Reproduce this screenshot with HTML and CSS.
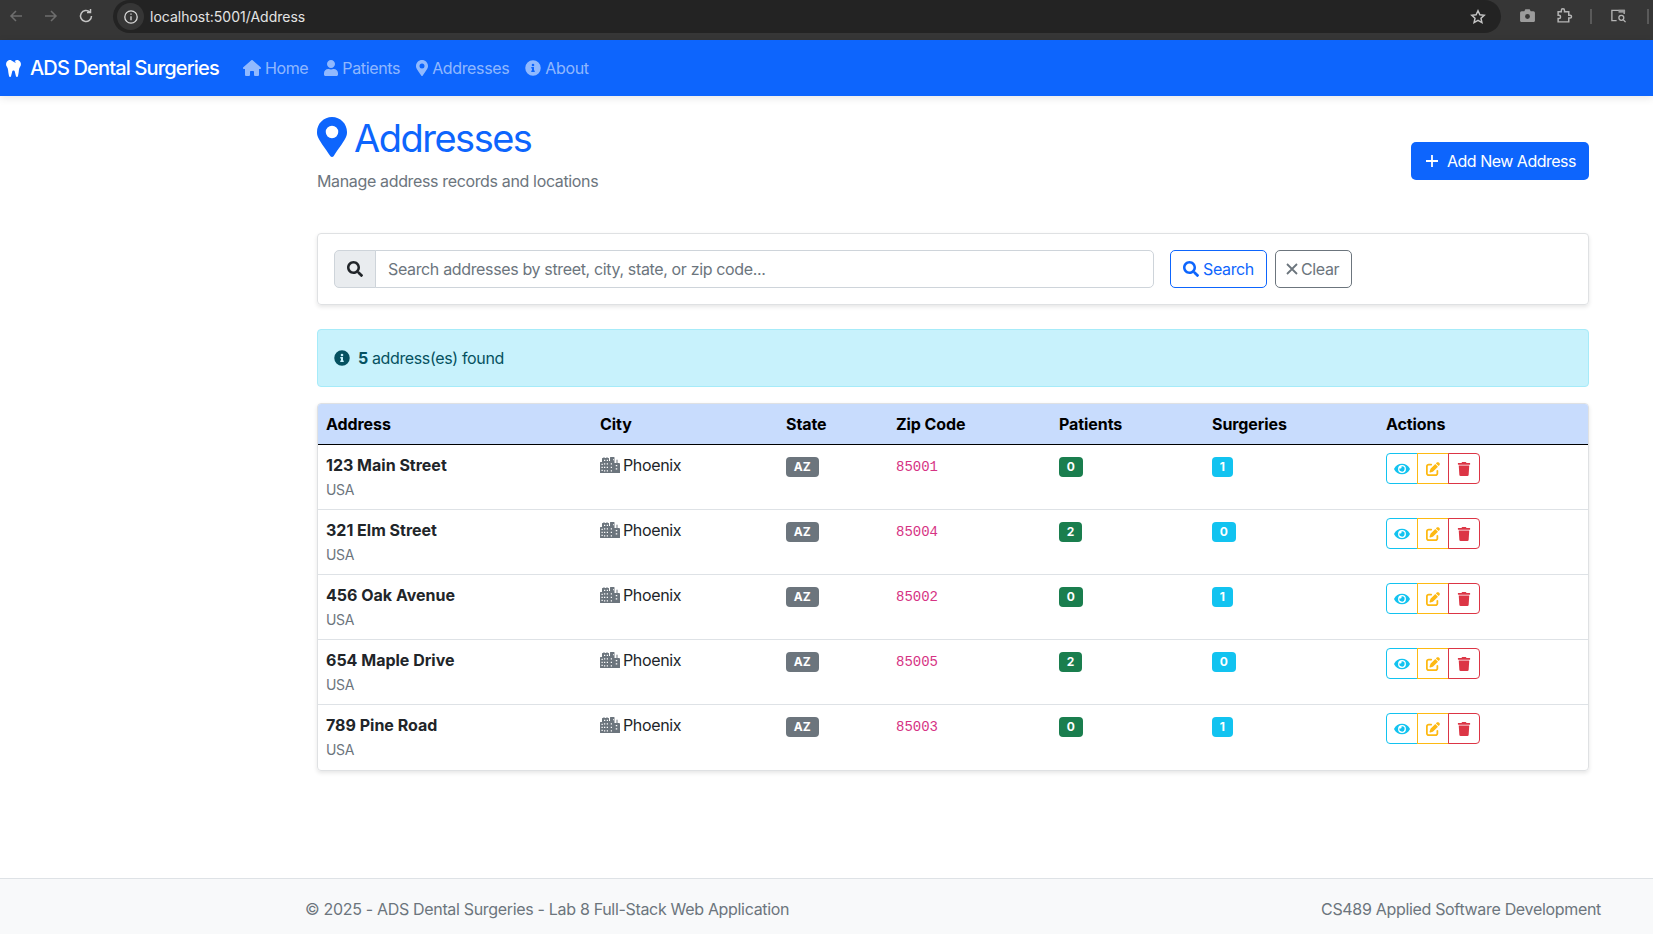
FILE: index.html
```html
<!DOCTYPE html>
<html lang="en">
<head>
    <meta charset="UTF-8">
    <meta name="viewport" content="width=device-width, initial-scale=1.0">
    <title>Addresses - ADS Dental Surgeries</title>
    <link rel="stylesheet" href="styles.css">
</head>
<body>
    <svg class="defs" aria-hidden="true">
        <symbol id="i-tooth" viewBox="0 0 448 512"><path d="M443.98 96.25c-11.01-45.22-47.11-82.06-92.01-93.72-32.19-8.36-63 5.1-89.14 24.33-3.25 2.39-6.96 3.73-10.5 5.48l28.32 18.21c7.42 4.77 9.58 14.67 4.8 22.11-4.46 6.95-14.27 9.86-22.11 4.8L162.83 12.84c-20.7-10.85-43.38-16.4-66.81-10.31-44.9 11.67-81 48.5-92.01 93.72-10.13 41.62-.42 80.81 21.5 110.43 23.36 31.57 32.68 68.66 36.29 107.35 4.4 47.16 10.33 94.16 20.94 140.32l7.8 33.95c3.19 13.87 15.49 23.7 29.67 23.7 13.97 0 26.15-9.55 29.54-23.16l34.47-138.42c4.56-18.32 20.96-31.16 39.76-31.16s35.2 12.85 39.76 31.16l34.47 138.42c3.39 13.61 15.57 23.16 29.54 23.16 14.18 0 26.48-9.83 29.67-23.7l7.8-33.95c10.61-46.15 16.53-93.16 20.94-140.32 3.61-38.7 12.93-75.78 36.29-107.35 21.95-29.61 31.66-68.8 21.53-110.43z"/></symbol>
        <symbol id="i-home" viewBox="0 0 576 512"><path d="M575.8 255.500c0 18-15 32.100-32 32.100h-32l.7 160.200c0 2.700-.2 5.400-.5 8.100V472c0 22.100-17.900 40-40 40H456c-1.100 0-2.200 0-3.300-.1-1.400.1-2.800.1-4.200.1H392c-22.100 0-40-17.900-40-40v-88c0-17.700-14.300-32-32-32h-64c-17.700 0-32 14.300-32 32v88c0 22.100-17.900 40-40 40h-55.900c-1.500 0-3-.1-4.500-.2-1.200.1-2.400.2-3.600.2H104c-22.100 0-40-17.900-40-40V360c0-.9 0-1.900.1-2.800v-69.600H32c-18 0-32-14-32-32.100 0-9 3-17 10-24L266.400 8c7-7 15-8 22-8s15 2 21 7l255.400 224.500c8 7 12 15 11 24z"/></symbol>
        <symbol id="i-user" viewBox="0 0 448 512"><path d="M224 256c70.7 0 128-57.3 128-128S294.7 0 224 0 96 57.3 96 128s57.3 128 128 128zm89.6 32h-16.7c-22.2 10.2-46.9 16-72.9 16s-50.6-5.8-72.9-16h-16.7C60.2 288 0 348.2 0 422.4V464c0 26.5 21.5 48 48 48h352c26.5 0 48-21.5 48-48v-41.6c0-74.2-60.2-134.4-134.4-134.4z"/></symbol>
        <symbol id="i-pin" viewBox="0 0 384 512"><path fill-rule="evenodd" d="M172 501C27 291 0 263 0 192 0 86 86 0 192 0s192 86 192 192c0 71-27 99-172 309-10 14-30 14-40 0zM192 272a80 80 0 1 0 0-160 80 80 0 0 0 0 160z"/></symbol>
        <symbol id="i-info" viewBox="0 0 512 512"><path d="M256 8a248 248 0 1 0 0 496 248 248 0 0 0 0-496zm0 110a42 42 0 1 1 0 84 42 42 0 0 1 0-84zm56 254c0 7-5 12-12 12h-88c-7 0-12-5-12-12v-24c0-7 5-12 12-12h12v-64h-12c-7 0-12-5-12-12v-24c0-7 5-12 12-12h64c7 0 12 5 12 12v100h12c7 0 12 5 12 12z"/></symbol>
        <symbol id="i-search" viewBox="0 0 512 512"><path d="M505 442.7L405.3 343c-4.5-4.5-10.6-7-17-7H372c27.6-35.3 44-79.7 44-128C416 93.1 322.9 0 208 0S0 93.1 0 208s93.1 208 208 208c48.3 0 92.7-16.4 128-44v16.3c0 6.4 2.5 12.5 7 17l99.7 99.7c9.4 9.4 24.6 9.4 33.9 0l28.3-28.3c9.4-9.4 9.4-24.6.1-34zM208 336c-70.7 0-128-57.2-128-128 0-70.7 57.2-128 128-128 70.7 0 128 57.2 128 128 0 70.7-57.2 128-128 128z"/></symbol>
        <symbol id="i-city" viewBox="0 0 640 512"><path fill-rule="evenodd" d="M0 176a16 16 0 0 1 16-16h48V48a16 16 0 0 1 16-16h32V16a16 16 0 0 1 32 0v16h64V16a16 16 0 0 1 32 0v16h32a16 16 0 0 1 16 16v80h32V16a16 16 0 0 1 16-16h112a16 16 0 0 1 16 16v176h64V96a16 16 0 0 1 32 0v96h48a32 32 0 0 1 32 32v272a16 16 0 0 1-16 16H16a16 16 0 0 1-16-16zM48 216v40h40v-40zm0 96v40h40v-40zm0 96v40h40v-40zM128 88v40h40V88zm0 112v40h40v-40zm0 112v40h40v-40zm0 112v40h40v-40zM216 88v40h40V88zm0 112v40h40v-40zm0 112v40h40v-40zm0 112v40h40v-40zM344 200v40h40v-40zm0 112v40h40v-40zm0 112v40h40v-40zM504 256v40h48v-40zm0 104v40h48v-40zM416 64v40h24V64z"/></symbol>
        <symbol id="i-eye" viewBox="0 0 576 512"><path d="M572.52 241.4C518.29 135.59 410.93 64 288 64S57.68 135.64 3.48 241.41a32.35 32.35 0 0 0 0 29.19C57.71 376.41 165.07 448 288 448s230.32-71.64 284.52-177.41a32.35 32.35 0 0 0 0-29.19zM288 400a144 144 0 1 1 144-144 143.93 143.93 0 0 1-144 144zm0-240a95.31 95.31 0 0 0-25.31 3.79 47.85 47.85 0 0 1-66.9 66.9A95.78 95.78 0 1 0 288 160z"/></symbol>
        <symbol id="i-edit" viewBox="0 0 512 512"><path d="M471.6 21.700c-21.900-21.900-57.300-21.900-79.200 0L362.300 51.700l97.900 97.900 30.100-30.100c21.900-21.900 21.900-57.300 0-79.200L471.600 21.700zm-299.200 220c-6.100 6.100-10.800 13.600-13.500 21.900l-29.600 88.800c-2.900 8.600-.6 18.100 5.800 24.600s15.900 8.700 24.600 5.800l88.800-29.600c8.200-2.700 15.700-7.400 21.900-13.500L437.700 172.300 339.700 74.300 172.400 241.700zM96 64C43 64 0 107 0 160v256c0 53 43 96 96 96h256c53 0 96-43 96-96v-96c0-17.700-14.300-32-32-32s-32 14.300-32 32v96c0 17.700-14.300 32-32 32H96c-17.700 0-32-14.300-32-32V160c0-17.700 14.300-32 32-32h96c17.700 0 32-14.300 32-32s-14.300-32-32-32H96z"/></symbol>
        <symbol id="i-trash" viewBox="0 0 448 512"><path d="M432 32H312l-9.4-18.7A24 24 0 0 0 281.1 0H166.8a23.72 23.72 0 0 0-21.4 13.3L136 32H16A16 16 0 0 0 0 48v32a16 16 0 0 0 16 16h416a16 16 0 0 0 16-16V48a16 16 0 0 0-16-16zM53.2 467a48 48 0 0 0 47.9 45h245.8a48 48 0 0 0 47.9-45L416 128H32z"/></symbol>
    </svg>

    <div class="chrome">
        <svg class="chrome-icon dim" viewBox="0 0 16 16"><path d="M14 8H3M8 3 3 8l5 5"/></svg>
        <svg class="chrome-icon dim" viewBox="0 0 16 16"><path d="M2 8h11M8 3l5 5-5 5"/></svg>
        <svg class="chrome-icon" viewBox="0 0 16 16"><path d="M13.5 8a5.5 5.5 0 1 1-1.7-4M12.5 1v3.4H9"/></svg>
        <div class="urlbar">
            <span class="url-info"><svg viewBox="0 0 16 16"><circle cx="8" cy="8" r="6.2"/><path d="M8 7.2v4M8 4.6v1.2"/></svg></span>
            <span class="url-text">localhost:5001/Address</span>
            <svg class="chrome-icon star" viewBox="0 0 16 16"><path d="M8 1.8l1.9 4 4.3.5-3.2 3 .9 4.3L8 11.4l-3.9 2.2.9-4.3-3.2-3 4.3-.5z"/></svg>
        </div>
        <svg class="chrome-tool" viewBox="0 0 16 16"><path class="solid" fill-rule="evenodd" d="M1 5.5A1.5 1.5 0 0 1 2.500 4H5l1-2h4l1 2h2.500A1.500 1.500 0 0 1 15 5.500V13a1 1 0 0 1-1 1H2a1 1 0 0 1-1-1zM8 11.200a2.300 2.300 0 1 0 0-4.600 2.300 2.300 0 0 0 0 4.600z"/></svg>
        <svg class="chrome-tool" viewBox="0 0 16 16"><path d="M2 4.500h3V3.200a1.500 1.500 0 0 1 3 0v1.300h4v3.300h1.300a1.300 1.300 0 0 1 0 2.600H12V14H2v-3.200h.8a1.500 1.500 0 0 0 0-3H2z"/></svg>
        <span class="chrome-sep"></span>
        <svg class="chrome-tool" viewBox="0 0 18 16"><path d="M7 13.500H2V2.500h13v4"/><path class="solid" d="M9 2h7v3H9z"/><circle cx="12" cy="10.500" r="2.600"/><path d="M14 12.500l2.500 2.500"/></svg>
        <span class="chrome-sep last"></span>
    </div>

    <nav class="navbar">
        <a class="brand" href="#"><svg class="icon tooth"><use href="#i-tooth"/></svg>ADS Dental Surgeries</a>
        <div class="nav-links">
            <a href="#"><svg class="icon home"><use href="#i-home"/></svg>Home</a>
            <a href="#"><svg class="icon user"><use href="#i-user"/></svg>Patients</a>
            <a href="#"><svg class="icon pin"><use href="#i-pin"/></svg>Addresses</a>
            <a href="#"><svg class="icon info"><use href="#i-info"/></svg>About</a>
        </div>
    </nav>

    <main class="page">
        <div class="page-head">
            <div>
                <h1><svg class="icon"><use href="#i-pin"/></svg>Addresses</h1>
                <p class="lead">Manage address records and locations</p>
            </div>
            <a class="btn btn-primary" href="#"><svg class="stroke-icon" viewBox="0 0 16 16"><path d="M2 8h12M8 2v12"/></svg>Add New Address</a>
        </div>

        <form class="search-card">
            <div class="input-group">
                <span class="input-addon"><svg class="icon"><use href="#i-search"/></svg></span>
                <input type="text" placeholder="Search addresses by street, city, state, or zip code...">
            </div>
            <button class="btn btn-outline-primary" type="button"><svg class="icon"><use href="#i-search"/></svg>Search</button>
            <button class="btn btn-outline-secondary" type="button"><svg class="stroke-icon" viewBox="0 0 16 16"><path d="M3 3l10 10M13 3 3 13"/></svg>Clear</button>
        </form>

        <div class="alert"><svg class="icon"><use href="#i-info"/></svg><strong>5</strong> address(es) found</div>

        <div class="table-card">
            <table>
                <colgroup>
                    <col class="c-address"><col class="c-city"><col class="c-state"><col class="c-zip"><col class="c-patients"><col class="c-surgeries"><col>
                </colgroup>
                <thead>
                    <tr><th>Address</th><th>City</th><th>State</th><th>Zip Code</th><th>Patients</th><th>Surgeries</th><th>Actions</th></tr>
                </thead>
                <tbody>
                    <tr>
                        <td><strong>123 Main Street</strong><small>USA</small></td>
                        <td><svg class="icon city"><use href="#i-city"/></svg>Phoenix</td>
                        <td><span class="badge gray">AZ</span></td>
                        <td><code>85001</code></td>
                        <td><span class="badge green">0</span></td>
                        <td><span class="badge cyan">1</span></td>
                        <td><div class="btn-group"><a class="view" href="#"><svg class="icon"><use href="#i-eye"/></svg></a><a class="edit" href="#"><svg class="icon"><use href="#i-edit"/></svg></a><a class="del" href="#"><svg class="icon"><use href="#i-trash"/></svg></a></div></td>
                    </tr>
                    <tr>
                        <td><strong>321 Elm Street</strong><small>USA</small></td>
                        <td><svg class="icon city"><use href="#i-city"/></svg>Phoenix</td>
                        <td><span class="badge gray">AZ</span></td>
                        <td><code>85004</code></td>
                        <td><span class="badge green">2</span></td>
                        <td><span class="badge cyan">0</span></td>
                        <td><div class="btn-group"><a class="view" href="#"><svg class="icon"><use href="#i-eye"/></svg></a><a class="edit" href="#"><svg class="icon"><use href="#i-edit"/></svg></a><a class="del" href="#"><svg class="icon"><use href="#i-trash"/></svg></a></div></td>
                    </tr>
                    <tr>
                        <td><strong>456 Oak Avenue</strong><small>USA</small></td>
                        <td><svg class="icon city"><use href="#i-city"/></svg>Phoenix</td>
                        <td><span class="badge gray">AZ</span></td>
                        <td><code>85002</code></td>
                        <td><span class="badge green">0</span></td>
                        <td><span class="badge cyan">1</span></td>
                        <td><div class="btn-group"><a class="view" href="#"><svg class="icon"><use href="#i-eye"/></svg></a><a class="edit" href="#"><svg class="icon"><use href="#i-edit"/></svg></a><a class="del" href="#"><svg class="icon"><use href="#i-trash"/></svg></a></div></td>
                    </tr>
                    <tr>
                        <td><strong>654 Maple Drive</strong><small>USA</small></td>
                        <td><svg class="icon city"><use href="#i-city"/></svg>Phoenix</td>
                        <td><span class="badge gray">AZ</span></td>
                        <td><code>85005</code></td>
                        <td><span class="badge green">2</span></td>
                        <td><span class="badge cyan">0</span></td>
                        <td><div class="btn-group"><a class="view" href="#"><svg class="icon"><use href="#i-eye"/></svg></a><a class="edit" href="#"><svg class="icon"><use href="#i-edit"/></svg></a><a class="del" href="#"><svg class="icon"><use href="#i-trash"/></svg></a></div></td>
                    </tr>
                    <tr>
                        <td><strong>789 Pine Road</strong><small>USA</small></td>
                        <td><svg class="icon city"><use href="#i-city"/></svg>Phoenix</td>
                        <td><span class="badge gray">AZ</span></td>
                        <td><code>85003</code></td>
                        <td><span class="badge green">0</span></td>
                        <td><span class="badge cyan">1</span></td>
                        <td><div class="btn-group"><a class="view" href="#"><svg class="icon"><use href="#i-eye"/></svg></a><a class="edit" href="#"><svg class="icon"><use href="#i-edit"/></svg></a><a class="del" href="#"><svg class="icon"><use href="#i-trash"/></svg></a></div></td>
                    </tr>
                </tbody>
            </table>
        </div>
    </main>

    <footer class="footer">
        <span>© 2025 - ADS Dental Surgeries - Lab 8 Full-Stack Web Application</span>
        <span>CS489 Applied Software Development</span>
    </footer>
</body>
</html>
```

FILE: styles.css
```css
* {
    box-sizing: border-box;
}

body {
    margin: 0;
    min-height: 934px;
    display: flex;
    flex-direction: column;
    overflow: hidden;
    background: #fff;
    color: #212529;
    font-family: Inter, 'Liberation Sans', sans-serif;
    font-size: 16px;
    line-height: 24px;
    letter-spacing: -0.022em;
}

a {
    text-decoration: none;
}

.defs {
    display: none;
}

.icon {
    display: inline-block;
    width: 1em;
    height: 1em;
    fill: currentColor;
    flex: none;
}

.stroke-icon {
    width: 16px;
    height: 16px;
    flex: none;
    fill: none;
    stroke: currentColor;
    stroke-width: 1.8;
}

/* browser bar */
.chrome {
    height: 40px;
    flex: none;
    display: flex;
    align-items: flex-start;
    background: #363636;
}

.chrome-icon {
    width: 16px;
    height: 16px;
    margin: 8px 11px 0 8px;
    flex: none;
    fill: none;
    stroke: #c4c4c4;
    stroke-width: 1.5;
}

.chrome-icon.dim {
    stroke: #6e6e6e;
}

.urlbar {
    width: 1388px;
    height: 33px;
    flex: none;
    margin-left: 8px;
    margin-right: 18px;
    padding-left: 4px;
    display: flex;
    align-items: center;
    background: #232323;
    border-radius: 17px;
    color: #e3e3e3;
    font-size: 14px;
    letter-spacing: 0;
}

.url-info {
    width: 27px;
    height: 27px;
    display: flex;
    align-items: center;
    justify-content: center;
    background: #363636;
    border-radius: 50%;
    flex: none;
}

.url-info svg {
    width: 16px;
    height: 16px;
    fill: none;
    stroke: #dadada;
    stroke-width: 1.3;
}

.url-text {
    margin-left: 6px;
    flex: 1;
}

.star {
    margin: 0 15px 0 0;
}

.chrome-tool {
    width: 17px;
    height: 17px;
    margin: 7px 20px 0 0;
    flex: none;
    fill: none;
    stroke: #b5b5b5;
    stroke-width: 1.4;
}

.chrome-tool .solid {
    fill: #9c9c9c;
    stroke: none;
}

.chrome-sep {
    width: 2px;
    height: 15px;
    margin: 9px 18px 0 -3px;
    background: #5a5a5a;
    flex: none;
}

.chrome-sep.last {
    margin-right: 0;
    margin-left: 0;
}

/* navbar */
.navbar {
    height: 56px;
    flex: none;
    padding-left: 6px;
    display: flex;
    align-items: center;
    background: #0d65fd;
    box-shadow: 0 2px 8px rgba(0, 0, 0, 0.1);
}

.brand {
    display: flex;
    align-items: center;
    color: #fff;
    font-size: 20px;
    font-weight: 500;
    letter-spacing: -0.042em;
}

.tooth {
    width: 15px;
    height: 17px;
    margin-right: 9px;
}

.nav-links {
    display: flex;
    gap: 16px;
    margin-left: 24px;
    letter-spacing: -0.022em;
}

.nav-links a {
    display: flex;
    align-items: center;
    gap: 4px;
    color: rgba(255, 255, 255, 0.55);
}

.nav-links .home {
    width: 18px;
}

.nav-links .user {
    width: 14px;
}

.nav-links .pin {
    width: 12px;
}

/* page */
.page {
    flex: 1;
    padding: 20px 64px 0 317px;
}

.page-head {
    display: flex;
    align-items: flex-end;
    justify-content: space-between;
    padding-bottom: 40px;
}

h1 {
    margin: 1px 0 0;
    display: flex;
    align-items: center;
    gap: 7px;
    color: #0d65fd;
    font-size: 38px;
    font-weight: 400;
    line-height: 42px;
    letter-spacing: -1.5px;
}

h1 .icon {
    width: 30px;
    height: 40px;
    margin-top: -2px;
}

.lead {
    margin: 10px 0 0;
    color: #6c757d;
}

.btn {
    height: 38px;
    padding: 0 12px;
    display: inline-flex;
    align-items: center;
    gap: 6px;
    border: 1px solid transparent;
    border-radius: 5px;
    background: none;
    font: inherit;
    letter-spacing: inherit;
}

.btn-primary {
    margin-bottom: 13px;
    background: #0d65fd;
    color: #fff;
    gap: 7px;
    letter-spacing: -0.031em;
}

.btn-outline-primary {
    margin-left: 16px;
    border-color: #0d65fd;
    color: #0d65fd;
    gap: 4px;
}

.btn-outline-secondary {
    margin-left: 8px;
    border-color: #6c757d;
    color: #6c757d;
    gap: 1px;
    padding: 0 12px 0 8px;
}

.search-card {
    height: 72px;
    padding: 16px;
    display: flex;
    border: 1px solid #dfe1e3;
    border-radius: 4px;
    box-shadow: 0 2px 4px rgba(0, 0, 0, 0.1);
}

.input-group {
    width: 820px;
    display: flex;
}

.input-addon {
    width: 42px;
    display: flex;
    align-items: center;
    justify-content: center;
    background: #e9ecef;
    border: 1px solid #ced4da;
    border-radius: 5px 0 0 5px;
    color: #212529;
}

.input-group input {
    flex: 1;
    min-width: 0;
    margin-left: -1px;
    padding: 0 12px;
    border: 1px solid #ced4da;
    border-radius: 0 5px 5px 0;
    font: inherit;
    letter-spacing: inherit;
    outline: none;
}

.input-group input::placeholder {
    color: #6c757d;
}

.alert {
    height: 58px;
    margin-top: 24px;
    padding: 0 16px;
    display: flex;
    align-items: center;
    background: #c8f2fc;
    border: 1px solid #a6ebf9;
    border-radius: 4px;
    color: #055160;
}

.alert .icon {
    margin-right: 8px;
}

.alert strong {
    margin-right: 4px;
    font-weight: 700;
}

.table-card {
    margin-top: 16px;
    border: 1px solid #dfe1e3;
    border-radius: 4px;
    box-shadow: 0 2px 4px rgba(0, 0, 0, 0.1);
    overflow: hidden;
}

table {
    width: 100%;
    border-collapse: collapse;
    table-layout: fixed;
}

.c-address { width: 274px; }
.c-city { width: 186px; }
.c-state { width: 110px; }
.c-zip { width: 163px; }
.c-patients { width: 153px; }
.c-surgeries { width: 174px; }

th {
    height: 39px;
    padding: 8px;
    background: #c8dcfd;
    border-bottom: 1px solid #000;
    color: #000;
    font-weight: 700;
    text-align: left;
    letter-spacing: -0.005em;
}

td {
    height: 65px;
    padding: 8px 8px 7px;
    vertical-align: top;
    border-bottom: 1px solid #dee2e6;
}

tbody tr:last-child td {
    border-bottom: 0;
}

td strong {
    display: block;
    font-weight: 700;
    letter-spacing: 0;
}

td small {
    display: block;
    margin-top: 2px;
    color: #6c757d;
    font-size: 14px;
    line-height: 22px;
}

.city {
    width: 20px;
    height: 16px;
    margin-right: 3px;
    vertical-align: -2px;
    color: #6c757d;
}

.badge {
    display: inline-block;
    margin-top: 4px;
    padding: 0 7.800px;
    border-radius: 4px;
    color: #fff;
    font-size: 12px;
    font-weight: 700;
    line-height: 20px;
    letter-spacing: 0;
    vertical-align: top;
}

.gray { background: #6c757d; }
.green { background: #1a7e4e; }
.cyan { background: #12c3f0; }

code {
    color: #d63384;
    font-family: 'Liberation Mono', monospace;
    font-size: 14px;
    letter-spacing: 0;
}

.btn-group {
    display: flex;
    width: 94px;
    height: 31px;
}

.btn-group a {
    flex: 1;
    display: flex;
    align-items: center;
    justify-content: center;
    border: 1px solid currentColor;
    font-size: 14px;
}

.btn-group a + a {
    margin-left: -1px;
}

.view {
    color: #12c3f0;
    border-radius: 4px 0 0 4px;
}

.view .icon {
    width: 16px;
}

.edit {
    color: #fdb913;
}

.del {
    color: #dc3545;
    border-radius: 0 4px 4px 0;
}

/* footer */
.footer {
    height: 56px;
    flex: none;
    padding: 5px 52px 0 305px;
    display: flex;
    align-items: center;
    justify-content: space-between;
    background: #f8f9fa;
    border-top: 1px solid #dee2e6;
    color: #6c757d;
    letter-spacing: -0.02em;
}
```
